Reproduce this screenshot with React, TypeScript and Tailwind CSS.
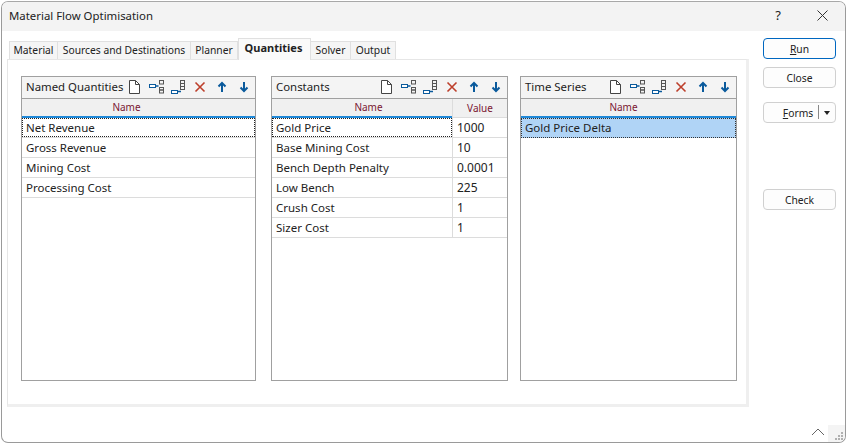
import type { ReactNode } from "react";

const F = "font-['Noto_Sans','Open_Sans',sans-serif]";

function Page() {
  return (
    <svg width="14" height="16" viewBox="0 0 14 16" fill="none" stroke="#444" strokeWidth="1">
      <path d="M2.5 1.5H8.5L12.5 5.5V14.5H2.5Z" fill="#fff" />
      <path d="M8.5 1.5V5.5H12.5" />
    </svg>
  );
}
function AddChild() {
  return (
    <svg width="16" height="16" viewBox="0 0 16 16" fill="none">
      <rect x="0.5" y="5.5" width="6" height="3" stroke="#0a5a9c" fill="#fff" />
      <path d="M6.5 7H9.5" stroke="#0a5a9c" strokeWidth="1.4" />
      <rect x="10.5" y="1.5" width="4" height="3.5" stroke="#555" />
      <rect x="10.5" y="8.5" width="4" height="2.5" stroke="#555" />
      <rect x="10.5" y="11" width="4" height="3" stroke="#555" />
    </svg>
  );
}
function AddBelow() {
  return (
    <svg width="16" height="16" viewBox="0 0 16 16" fill="none">
      <rect x="0.5" y="11.5" width="6" height="3" stroke="#0a5a9c" fill="#fff" />
      <path d="M6.5 12.5H10" stroke="#0a5a9c" strokeWidth="1.4" />
      <rect x="9.5" y="1.5" width="4" height="3" stroke="#555" />
      <rect x="9.5" y="4.5" width="4" height="3" stroke="#555" />
      <rect x="9.5" y="7.5" width="4" height="3" stroke="#555" />
    </svg>
  );
}
function Cross() {
  return (
    <svg width="12" height="12" viewBox="0 0 12 12" fill="none" stroke="#bd3f2b" strokeWidth="1.6">
      <path d="M1.5 1.5L10.5 10.5M10.5 1.5L1.5 10.5" />
    </svg>
  );
}
function Up() {
  return (
    <svg width="10" height="12" viewBox="0 0 10 12" fill="none" stroke="#0a5a9c" strokeWidth="2">
      <path d="M5 11V2M1.5 5.5L5 2L8.5 5.5" />
    </svg>
  );
}
function Down() {
  return (
    <svg width="10" height="12" viewBox="0 0 10 12" fill="none" stroke="#0a5a9c" strokeWidth="2">
      <path d="M5 1V10M1.5 6.5L5 10L8.5 6.5" />
    </svg>
  );
}

function Toolbar() {
  return (
    <div className="flex items-center ml-auto">
      <div className="w-[14px] flex"><Page /></div>
      <div className="w-[16px] ml-[8px] flex"><AddChild /></div>
      <div className="w-[16px] ml-[6px] flex"><AddBelow /></div>
      <div className="w-[12px] ml-[7px] flex"><Cross /></div>
      <div className="w-[10px] ml-[11px] flex"><Up /></div>
      <div className="w-[10px] ml-[12px] mr-[6px] flex"><Down /></div>
    </div>
  );
}

function Row({ label, value, focus }: { label: string; value?: string; focus?: boolean }) {
  return (
    <div className="flex h-5 border-b border-[#dcdcdc] text-[11.5px] text-[#222] leading-[19px]">
      <div className={"flex-1 min-w-0 pl-[4px] whitespace-nowrap " + (focus ? "outline-1 -outline-offset-1 outline-dotted outline-[#222]" : "")}>{label}</div>
      {value !== undefined && <div className="w-[55px] pl-[4px] border-l border-[#dcdcdc] text-[12px]">{value}</div>}
    </div>
  );
}

function Panel({ title, rows, two, selected, className, headClass }: { title: string; rows: [string, string?][]; two?: boolean; selected?: boolean; className: string; headClass: string }) {
  return (
    <div className={"border border-[#a0a0a0] h-[305px] flex flex-col bg-white shrink-0 " + className}>
      <div className="h-[22px] shrink-0 flex items-center pl-[4px] pb-[2px] bg-[#f4f4f4] text-[11.4px] text-[#222] border-b border-[#a0a0a0]">
        <span className="whitespace-nowrap">{title}</span>
        <Toolbar />
      </div>
      <div className="flex h-[19px] shrink-0 bg-[#f0f0f0] text-[10px] text-[#7a1530] leading-[16px]">
        <div className={"flex-1 text-center border-b-2 border-[#1e88d8] " + headClass}>Name</div>
        {two && <div className="w-[55px] text-center border-l border-b border-[#dcdcdc] leading-[18px]">Value</div>}
      </div>
      {selected ? (
        <div className="h-5 bg-[#b0d4f6] pl-[4px] text-[11.5px] text-[#222] leading-[19px] outline-1 -outline-offset-1 outline-dotted outline-[#333]">
          {rows[0][0]}
        </div>
      ) : (
        rows.map((r, i) => <Row key={r[0]} label={r[0]} value={r[1]} focus={i === 0} />)
      )}
    </div>
  );
}

function Btn({ children, primary, className }: { children: ReactNode; primary?: boolean; className?: string }) {
  return (
    <div className={"w-[73px] h-[21px] flex items-center justify-center pt-[2px] rounded-[4px] bg-[#fdfdfd] text-[10.3px] text-[#222] " + (primary ? "border-[1.5px] border-[#0067c0] " : "border border-[#d0d0d0] ") + (className || "")}>
      {children}
    </div>
  );
}

function Tab({ children, active, w }: { children: string; active?: boolean; w: string }) {
  return (
    <div
      className={
        "flex items-center justify-center text-[#222] border-t border-r border-[#e0e0e0] " +
        w +
        (active
          ? " h-[22px] border-l bg-[#fafafa] font-bold text-[11px] relative top-[1px] z-10 pb-[2px] pr-[2px]"
          : " h-[18px] bg-[#f5f5f5] text-[10.3px]")
      }
    >
      {children}
    </div>
  );
}

export default function App() {
  return (
    <div className={"w-[847px] h-[448px] bg-white overflow-hidden pt-[1px] pl-[1px] " + F}>
      <div className="w-[845px] h-[442px] border border-[#9a9a9a] border-t-[#a8a8a8] rounded-[7px] bg-white flex flex-col overflow-hidden relative">
        <div className="h-[29px] shrink-0 bg-[#f3f3f3] flex items-center pl-[7px] pb-[2px] text-[11.4px] text-[#222]">
          <span>Material Flow Optimisation</span>
          <span className="ml-auto text-[13px] mr-[36px]">?</span>
          <svg width="11" height="11" viewBox="0 0 11 11" className="mr-[17px]" stroke="#333" strokeWidth="1" fill="none">
            <path d="M0.5 0.5L10.5 10.5M10.5 0.5L0.5 10.5" />
          </svg>
        </div>
        <div className="flex flex-1 min-h-0">
          <div className="w-[748px] shrink-0 pl-[5px] pt-[10px]">
            <div className="flex pl-[2px] h-[18px] items-end relative">
              <Tab w="w-[49px] border-l">Material</Tab>
              <Tab w="w-[133px]">Sources and Destinations</Tab>
              <Tab w="w-[47px]">Planner</Tab>
              <Tab w="w-[73px]" active>Quantities</Tab>
              <Tab w="w-[40px]">Solver</Tab>
              <Tab w="w-[45px]">Output</Tab>
            </div>
            <div className="w-[742px] h-[348px] border-l border-t border-r-[3px] border-b-[3px] border-l-[#e6e6e6] border-t-[#e6e6e6] border-r-[#efefef] border-b-[#efefef] flex pl-[13px] pt-[16px]">
              <Panel className="w-[235px]" headClass="pr-[24px]" title="Named Quantities" rows={[["Net Revenue"], ["Gross Revenue"], ["Mining Cost"], ["Processing Cost"]]} />
              <Panel className="w-[237px] ml-[15px]" headClass="pl-[13px]" two title="Constants" rows={[["Gold Price", "1000"], ["Base Mining Cost", "10"], ["Bench Depth Penalty", "0.0001"], ["Low Bench", "225"], ["Crush Cost", "1"], ["Sizer Cost", "1"]]} />
              <Panel className="w-[217px] ml-[12px]" headClass="pr-[10px]" selected title="Time Series" rows={[["Gold Price Delta"]]} />
            </div>
          </div>
          <div className="flex flex-col pl-[13px] pt-[7px]">
            <Btn primary><span><u>R</u>un</span></Btn>
            <Btn className="mt-[8px]">Close</Btn>
            <Btn className="mt-[14px] relative">
              <span className="ml-[-3px]"><u>F</u>orms</span>
              <span className="absolute right-[16px] top-[2px] h-[14px] border-l border-[#888]" />
              <span className="absolute right-[5px] top-[8px] border-x-[3px] border-x-transparent border-t-[4px] border-t-[#222]" />
            </Btn>
            <Btn className="mt-[66px]">Check</Btn>
          </div>
        </div>
        <svg width="14" height="8" viewBox="0 0 14 8" fill="none" stroke="#666" className="absolute right-[20px] bottom-[6px]">
          <path d="M1 7L7 1L13 7" />
        </svg>
        <div className="absolute right-0 bottom-0 w-[17px] h-[17px] bg-[#f4f4f4]">
          <svg width="17" height="17" viewBox="0 0 17 17" fill="#b0b0b0">
            <rect x="13" y="7" width="2" height="2" />
            <rect x="10" y="10" width="2" height="2" />
            <rect x="13" y="10" width="2" height="2" />
            <rect x="7" y="13" width="2" height="2" />
            <rect x="10" y="13" width="2" height="2" />
            <rect x="13" y="13" width="2" height="2" />
          </svg>
        </div>
      </div>
    </div>
  );
}
